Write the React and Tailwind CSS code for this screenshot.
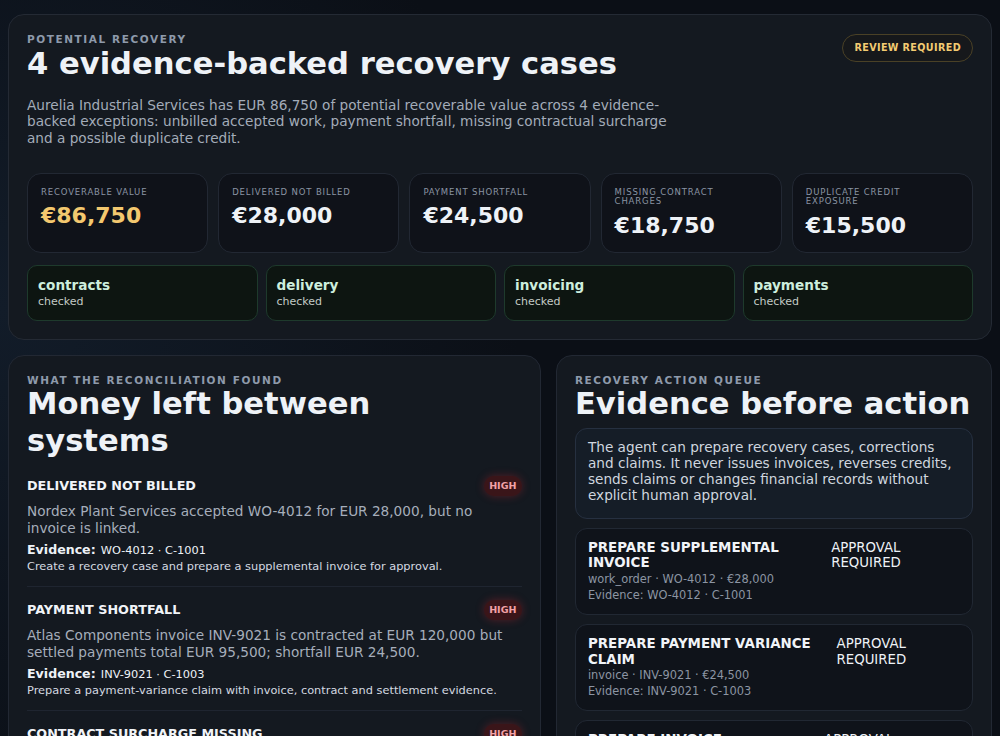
const metrics = [
  { label: 'Recoverable value', value: '€86,750', gold: true },
  { label: 'Delivered not billed', value: '€28,000' },
  { label: 'Payment shortfall', value: '€24,500' },
  { label: 'Missing contract charges', value: '€18,750' },
  { label: 'Duplicate credit exposure', value: '€15,500' },
]

const checks = ['contracts', 'delivery', 'invoicing', 'payments']

const findings = [
  {
    title: 'Delivered not billed',
    text: 'Nordex Plant Services accepted WO-4012 for EUR 28,000, but no invoice is linked.',
    evidence: 'WO-4012 · C-1001',
    action: 'Create a recovery case and prepare a supplemental invoice for approval.',
  },
  {
    title: 'Payment shortfall',
    text: 'Atlas Components invoice INV-9021 is contracted at EUR 120,000 but settled payments total EUR 95,500; shortfall EUR 24,500.',
    evidence: 'INV-9021 · C-1003',
    action: 'Prepare a payment-variance claim with invoice, contract and settlement evidence.',
  },
  {
    title: 'Contract surcharge missing',
    text: 'Helvig Logistics invoice INV-9034 omits the contractual expedite surcharge of EUR 18,750.',
    evidence: 'INV-9034 · C-1007',
    action: 'Prepare an invoice correction for the missing surcharge.',
  },
]

const actions = [
  { title: 'Prepare supplemental invoice', meta: 'work_order · WO-4012 · €28,000', evidence: 'WO-4012 · C-1001' },
  { title: 'Prepare payment variance claim', meta: 'invoice · INV-9021 · €24,500', evidence: 'INV-9021 · C-1003' },
  { title: 'Prepare invoice correction', meta: 'invoice · INV-9034 · €18,750', evidence: 'INV-9034 · C-1007' },
]

function Eyebrow({ children }) {
  return (
    <p className="pt-px text-[10.5px] font-bold uppercase leading-none tracking-[0.15em] text-[#8e9aab]">{children}</p>
  )
}

export default function App() {
  return (
    <div className="min-h-screen bg-[#0b0f16] bg-[radial-gradient(circle_at_0%_35%,#121c29_0%,#0b0f16_45%)] px-2 pb-8 pt-[14px] font-['DejaVu_Sans',sans-serif] text-[#eef2f7]">
      <section className="rounded-[16px] border border-[#242a34] bg-[#141920] p-[18px]">
        <div className="flex items-start justify-between">
          <div>
            <Eyebrow>Potential recovery</Eyebrow>
            <h1 className="mt-px text-[30.6px] font-bold leading-[1.2] text-[#eef2f7]">4 evidence-backed recovery cases</h1>
          </div>
          <span className="mt-px flex h-7 items-center rounded-full border border-[#4a4126] bg-[#16181b] px-[11px] text-[9.6px] font-bold uppercase tracking-[0.04em] text-[#f3cb72]">
            Review required
          </span>
        </div>
        <p className="mt-[15px] max-w-[660px] text-[13.65px] leading-[16.2px] text-[#a3acb9]">
          Aurelia Industrial Services has EUR 86,750 of potential recoverable value across 4 evidence-backed exceptions: unbilled accepted work, payment shortfall, missing contractual surcharge and a possible duplicate credit.
        </p>

        <div className="mt-[27px] grid grid-cols-5 gap-[10px]">
          {metrics.map((m) => (
            <div key={m.label} className="rounded-[14px] border border-[#222833] bg-[#0f1219] px-[13px] pb-[13px] pt-[14px]">
              <p className="max-w-[132px] text-[8.5px] uppercase leading-[1.1] tracking-[0.1em] text-[#8a94a3]">{m.label}</p>
              <p className={`mt-[6px] text-[22px] font-bold leading-[1.2] ${m.gold ? 'text-[#f3c86f]' : 'text-[#eef2f7]'}`}>
                {m.value}
              </p>
            </div>
          ))}
        </div>

        <div className="mt-3 grid grid-cols-4 gap-2">
          {checks.map((c) => (
            <div key={c} className="rounded-[10px] border border-[#1e3a2c] bg-[#0d1511] px-[10px] pb-[10px] pt-[11px]">
              <p className="text-[13.6px] font-bold leading-[1.2] text-[#cdeedd]">{c}</p>
              <p className="mt-[2px] text-[11px] leading-[1.3] text-[#c3cbc6]">checked</p>
            </div>
          ))}
        </div>
      </section>

      <div className="mt-[15px] grid grid-cols-[1.222fr_1fr] items-start gap-[15px]">
        <section className="rounded-[16px] border border-[#222833] bg-[#141920] p-[18px]">
          <Eyebrow>What the reconciliation found</Eyebrow>
          <h2 className="mt-px text-[30.6px] font-bold leading-[1.2] text-[#eef2f7]">Money left between systems</h2>
          <div className="mt-[17px]">
            {findings.map((f, i) => (
              <div key={f.title} className={i > 0 ? 'border-t border-[#1f2530] pb-[12px] pt-[13px]' : 'pb-[12px]'}>
                <div className="flex h-5 items-center justify-between">
                  <h3 className="-mt-[2px] text-[12.75px] font-bold uppercase text-[#f1f4f8]">{f.title}</h3>
                  <span className="flex h-5 items-center rounded-full bg-[#3a1519] px-[5.5px] text-[9.5px] font-bold text-[#f2a1a7] shadow-[0_0_8px_rgba(200,40,50,0.35)]">
                    HIGH
                  </span>
                </div>
                <p className="mt-[7px] text-[13.65px] leading-[16.5px] text-[#a6aebb]">{f.text}</p>
                <p className="mt-[5px] leading-[16px] text-[#eef2f7]">
                  <strong className="text-[12.6px] font-bold">Evidence:</strong>{' '}
                  <span className="text-[11.35px]">{f.evidence}</span>
                </p>
                <p className="mt-px text-[11.35px] leading-[15px] text-[#d4d9e0]">{f.action}</p>
              </div>
            ))}
          </div>
        </section>

        <section className="rounded-[16px] border border-[#222833] bg-[#141920] p-[18px]">
          <Eyebrow>Recovery action queue</Eyebrow>
          <h2 className="mt-px text-[30.6px] font-bold leading-[1.2] text-[#eef2f7]">Evidence before action</h2>
          <p className="mt-[5px] rounded-[12px] border border-[#263040] bg-[#151d27] px-3 pb-[14px] pt-[10px] text-[13.65px] leading-[16.2px] text-[#cfd6df]">
            The agent can prepare recovery cases, corrections and claims. It never issues invoices, reverses credits, sends claims or changes financial records without explicit human approval.
          </p>
          <div className="mt-[9px] flex flex-col gap-[9px]">
            {actions.map((a) => (
              <div key={a.title} className="flex justify-between gap-3 rounded-[12px] border border-[#212833] bg-[#0f131a] px-3 pb-[11px] pt-[11px]">
                <div>
                  <p className="text-[13.4px] font-bold uppercase leading-[15.7px] text-[#f1f4f8]">{a.title}</p>
                  <p className="text-[11.4px] leading-[16px] text-[#8c95a3]">{a.meta}</p>
                  <p className="text-[11.4px] leading-[16px] text-[#8c95a3]">Evidence: {a.evidence}</p>
                </div>
                <p className="text-[13.3px] uppercase leading-[15.7px] text-[#eef2f7]">Approval required</p>
              </div>
            ))}
          </div>
        </section>
      </div>
    </div>
  )
}
